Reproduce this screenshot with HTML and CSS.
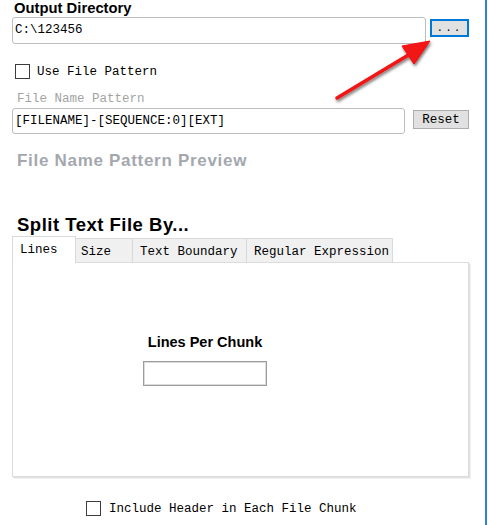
FILE: index.html
```html
<!DOCTYPE html>
<html lang="en">

<head>
  <meta charset="UTF-8">
  <title>Split Text File</title>
  <link rel="stylesheet" href="styles.css">
</head>

<body>
  <div class="window">
    <div class="form">
      <div class="label-bold">Output Directory</div>
      <div class="row">
        <div class="textbox dir">C:\123456</div>
        <button class="btn browse">...</button>
      </div>

      <label class="check use-pattern"><span class="box"></span>Use File Pattern</label>

      <div class="hint">File Name Pattern</div>
      <div class="row">
        <div class="textbox pattern">[FILENAME]-[SEQUENCE:0][EXT]</div>
        <button class="btn reset">Reset</button>
      </div>

      <div class="preview">File Name Pattern Preview</div>

      <div class="split-title">Split Text File By...</div>
      <div class="tabs">
        <div class="tab tab-lines active">Lines</div>
        <div class="tab tab-size">Size</div>
        <div class="tab tab-boundary">Text Boundary</div>
        <div class="tab tab-regex">Regular Expression</div>
      </div>
      <div class="panel">
        <div class="chunk">
          <div class="chunk-label">Lines Per Chunk</div>
          <div class="chunk-input"></div>
        </div>
      </div>

      <label class="check include"><span class="box"></span>Include Header in Each File Chunk</label>
    </div>
  </div>

  <!-- annotation arrow pointing at the browse button -->
  <svg class="arrow" width="488" height="525" viewBox="0 0 488 525">
    <defs>
      <filter id="shade" x="-20%" y="-20%" width="140%" height="140%">
        <feDropShadow dx="1" dy="2" stdDeviation="1.5" flood-color="#000" flood-opacity="0.55" />
      </filter>
    </defs>
    <g filter="url(#shade)" fill="#f21212" stroke="#f21212">
      <line x1="337" y1="98" x2="410" y2="54" stroke-width="3.5" stroke-linecap="round" />
      <polygon points="430,41 402,46 414,64" stroke-width="1" stroke-linejoin="round" />
    </g>
  </svg>
</body>

</html>
```

FILE: styles.css
```css
body {
  margin: 0;
  background: #fff;
  color: #000;
  font-family: "Liberation Mono", monospace;
  font-size: 12.5px;
}

.window {
  width: 485px;
  height: 525px;
  border-right: 2px solid #2f80d6;
}

.form {
  padding-left: 12px;
}

.label-bold {
  font-family: "Liberation Sans", Arial, sans-serif;
  font-weight: bold;
  font-size: 14.8px;
  line-height: 17px;
  padding-left: 2px;
}

.row {
  display: flex;
  align-items: flex-start;
}

.textbox {
  box-sizing: border-box;
  border: 1px solid #bdbdbd;
  border-radius: 3px;
  padding: 0 2px;
  white-space: nowrap;
}

.dir {
  width: 414px;
  height: 27px;
  line-height: 25px;
}

.pattern {
  width: 393px;
  height: 26px;
  line-height: 24px;
}

.btn {
  box-sizing: border-box;
  background: #e1e1e1;
  font-family: "Liberation Mono", monospace;
  font-size: 12.5px;
  color: #000;
  padding: 0;
}

.browse {
  width: 39px;
  height: 18px;
  margin: 2px 0 0 4px;
  border: 2px solid #0078d7;
  line-height: 14px;
  font-size: 11px;
  letter-spacing: 2px;
}

.reset {
  width: 56px;
  height: 19px;
  margin: 2px 0 0 8px;
  border: 1px solid #adadad;
  line-height: 19px;
}

.check {
  display: flex;
  align-items: center;
  height: 15px;
}

.box {
  box-sizing: border-box;
  width: 15px;
  height: 15px;
  border: 1px solid #3c3c3c;
  background: #fff;
}

.use-pattern {
  margin: 20px 0 0 3px;
}

.use-pattern .box {
  margin-right: 7px;
}

.hint {
  margin: 12px 0 1px 5px;
  line-height: 16px;
  color: #a3a3a3;
}

.preview {
  margin: 17px 0 0 5px;
  font-family: "Liberation Sans", Arial, sans-serif;
  font-weight: bold;
  font-size: 17px;
  letter-spacing: 0.7px;
  line-height: 20px;
  color: #a4a8ae;
}

.split-title {
  margin: 43px 0 0 5px;
  font-family: "Liberation Sans", Arial, sans-serif;
  font-weight: bold;
  font-size: 18.5px;
  letter-spacing: 0.5px;
  line-height: 22px;
}

.tabs {
  display: flex;
  align-items: flex-end;
  height: 26px;
}

.tab {
  box-sizing: border-box;
  height: 24px;
  line-height: 24px;
  padding: 1px 0 0 7px;
  background: #f0f0f0;
  border: 1px solid #d9d9d9;
  border-bottom: none;
  margin-left: -1px;
  white-space: nowrap;
}

.tab-lines {
  width: 64px;
  margin-left: 0;
}

.tab-size {
  width: 58px;
  padding-left: 5px;
}

.tab-boundary {
  width: 115px;
}

.tab-regex {
  width: 147px;
}

.tab.active {
  position: relative;
  z-index: 1;
  height: 27px;
  line-height: 24px;
  padding-top: 1px;
  margin-bottom: -1px;
  background: #fff;
}

.panel {
  box-sizing: border-box;
  width: 457px;
  height: 215px;
  border: 1px solid #dcdcdc;
  box-shadow: 1px 1px 0 #e2e2e2, 2px 2px 0 #f0f0f0;
}

.chunk {
  display: flex;
  flex-direction: column;
  align-items: center;
  width: 124px;
  margin: 70px 0 0 130px;
}

.chunk-label {
  font-family: "Liberation Sans", Arial, sans-serif;
  font-weight: bold;
  font-size: 14.5px;
  line-height: 18px;
  white-space: nowrap;
}

.chunk-input {
  box-sizing: border-box;
  width: 124px;
  height: 25px;
  margin-top: 10px;
  border: 1px solid #9c9c9c;
  box-shadow: inset 0 0 0 1px #dcdcdc;
}

.include {
  margin: 24px 0 0 74px;
}

.include .box {
  margin-right: 8px;
}

.arrow {
  position: absolute;
  left: 0;
  top: 0;
  pointer-events: none;
}
```
